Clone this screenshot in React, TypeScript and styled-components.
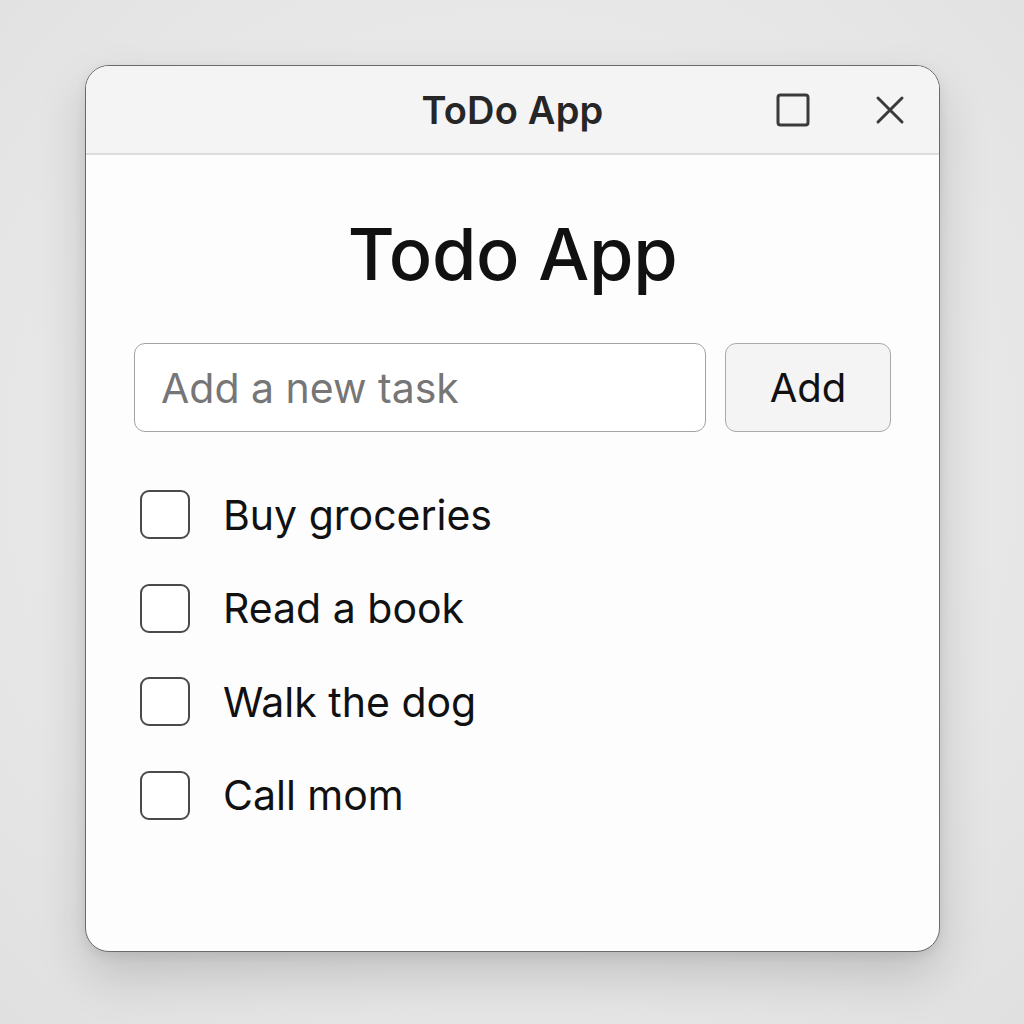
import React, { useState } from "react";
import styled, { createGlobalStyle } from "styled-components";

const GlobalStyle = createGlobalStyle`
  html, body {
    margin: 0;
    padding: 0;
  }
  body {
    background: #e8e8e8;
    font-family: Inter, "Noto Sans", "Liberation Sans", sans-serif;
  }
`;

const Page = styled.div`
  width: 1024px;
  height: 1024px;
  box-sizing: border-box;
  padding: 65px 0 0 85px;
  background: radial-gradient(circle at 50% 45%, #f0f0f0 0%, #e6e6e6 70%, #e0e0e0 100%);
`;

const Window = styled.div`
  width: 855px;
  height: 887px;
  box-sizing: border-box;
  border: 1px solid #6a6a6a;
  border-radius: 24px;
  background: #fdfdfd;
  overflow: hidden;
  display: flex;
  flex-direction: column;
  box-shadow: 0 24px 50px rgba(0, 0, 0, 0.16), 0 4px 12px rgba(0, 0, 0, 0.08);
`;

const TitleBar = styled.div`
  position: relative;
  height: 89px;
  flex-shrink: 0;
  box-sizing: border-box;
  background: #f5f4f5;
  border-bottom: 2px solid #dcdcdc;
  display: flex;
  align-items: center;
  justify-content: center;
`;

const WindowTitle = styled.div`
  font-size: 38px;
  font-weight: 600;
  color: #262626;
  letter-spacing: 0.2px;
`;

const Controls = styled.div`
  position: absolute;
  right: 29px;
  top: 0;
  bottom: 0;
  display: flex;
  align-items: center;
  gap: 57px;
`;

const ControlButton = styled.button`
  border: none;
  background: none;
  padding: 0;
  width: 40px;
  height: 40px;
  display: flex;
  align-items: center;
  justify-content: center;
  cursor: pointer;
`;

const Content = styled.div`
  padding: 0 48px;
  display: flex;
  flex-direction: column;
`;

const Heading = styled.h1`
  margin: 58px 0 0;
  font-size: 72px;
  line-height: 82px;
  font-weight: 500;
  text-align: center;
  color: #111;
  letter-spacing: -0.3px;
`;

const InputRow = styled.form`
  margin-top: 48px;
  display: flex;
  gap: 19px;
`;

const TaskInput = styled.input`
  flex: 1;
  min-width: 0;
  height: 89px;
  box-sizing: border-box;
  border: 1.5px solid #a3a3a3;
  border-radius: 11px;
  background: #fff;
  padding: 0 26px;
  font-family: inherit;
  font-size: 41px;
  color: #222;
  outline: none;

  &::placeholder {
    color: #767676;
  }
`;

const AddButton = styled.button`
  flex-shrink: 0;
  width: 166px;
  height: 89px;
  box-sizing: border-box;
  border: 1.5px solid #aaa;
  border-radius: 11px;
  background: #f4f4f4;
  font-family: inherit;
  font-size: 40px;
  color: #111;
  cursor: pointer;
`;

const TaskList = styled.ul`
  list-style: none;
  margin: 36px 0 0;
  padding: 0;
`;

const TaskRow = styled.li`
  height: 93.5px;
  display: flex;
  align-items: center;
  padding-left: 6px;
  gap: 33px;
`;

const CheckBox = styled.button<{ checked: boolean }>`
  width: 50px;
  height: 49px;
  box-sizing: border-box;
  border: 2px solid #4a4a4a;
  border-radius: 9px;
  background: ${(p) => (p.checked ? "#4a4a4a" : "#fff")};
  padding: 0;
  cursor: pointer;
`;

const TaskText = styled.span<{ done: boolean }>`
  font-size: 41px;
  color: #111;
  text-decoration: ${(p) => (p.done ? "line-through" : "none")};
`;

const MaximizeIcon = () => (
  <svg width="34" height="34" viewBox="0 0 34 34">
    <rect x="2" y="2" width="30" height="30" rx="2.5" fill="none" stroke="#3a3a3a" strokeWidth="3" />
  </svg>
);

const CloseIcon = () => (
  <svg width="30" height="30" viewBox="0 0 30 30">
    <path d="M3 3 L27 27 M27 3 L3 27" stroke="#3a3a3a" strokeWidth="3" strokeLinecap="round" />
  </svg>
);

const initialTasks = [
  { id: 1, text: "Buy groceries", done: false },
  { id: 2, text: "Read a book", done: false },
  { id: 3, text: "Walk the dog", done: false },
  { id: 4, text: "Call mom", done: false },
];

const App = () => {
  const [tasks, setTasks] = useState(initialTasks);
  const [draft, setDraft] = useState("");

  const handleAdd = (e: React.FormEvent) => {
    e.preventDefault();
    if (!draft.trim()) return;
    setTasks([...tasks, { id: Date.now(), text: draft.trim(), done: false }]);
    setDraft("");
  };

  const toggle = (id: number) => {
    setTasks(tasks.map((t) => (t.id === id ? { ...t, done: !t.done } : t)));
  };

  return (
    <Page>
      <GlobalStyle />
      <Window>
        <TitleBar>
          <WindowTitle>ToDo App</WindowTitle>
          <Controls>
            <ControlButton aria-label="Maximize">
              <MaximizeIcon />
            </ControlButton>
            <ControlButton aria-label="Close">
              <CloseIcon />
            </ControlButton>
          </Controls>
        </TitleBar>
        <Content>
          <Heading>Todo App</Heading>
          <InputRow onSubmit={handleAdd}>
            <TaskInput
              placeholder="Add a new task"
              value={draft}
              onChange={(e) => setDraft(e.target.value)}
            />
            <AddButton type="submit">Add</AddButton>
          </InputRow>
          <TaskList>
            {tasks.map((task) => (
              <TaskRow key={task.id}>
                <CheckBox checked={task.done} onClick={() => toggle(task.id)} />
                <TaskText done={task.done}>{task.text}</TaskText>
              </TaskRow>
            ))}
          </TaskList>
        </Content>
      </Window>
    </Page>
  );
};

export default App;
